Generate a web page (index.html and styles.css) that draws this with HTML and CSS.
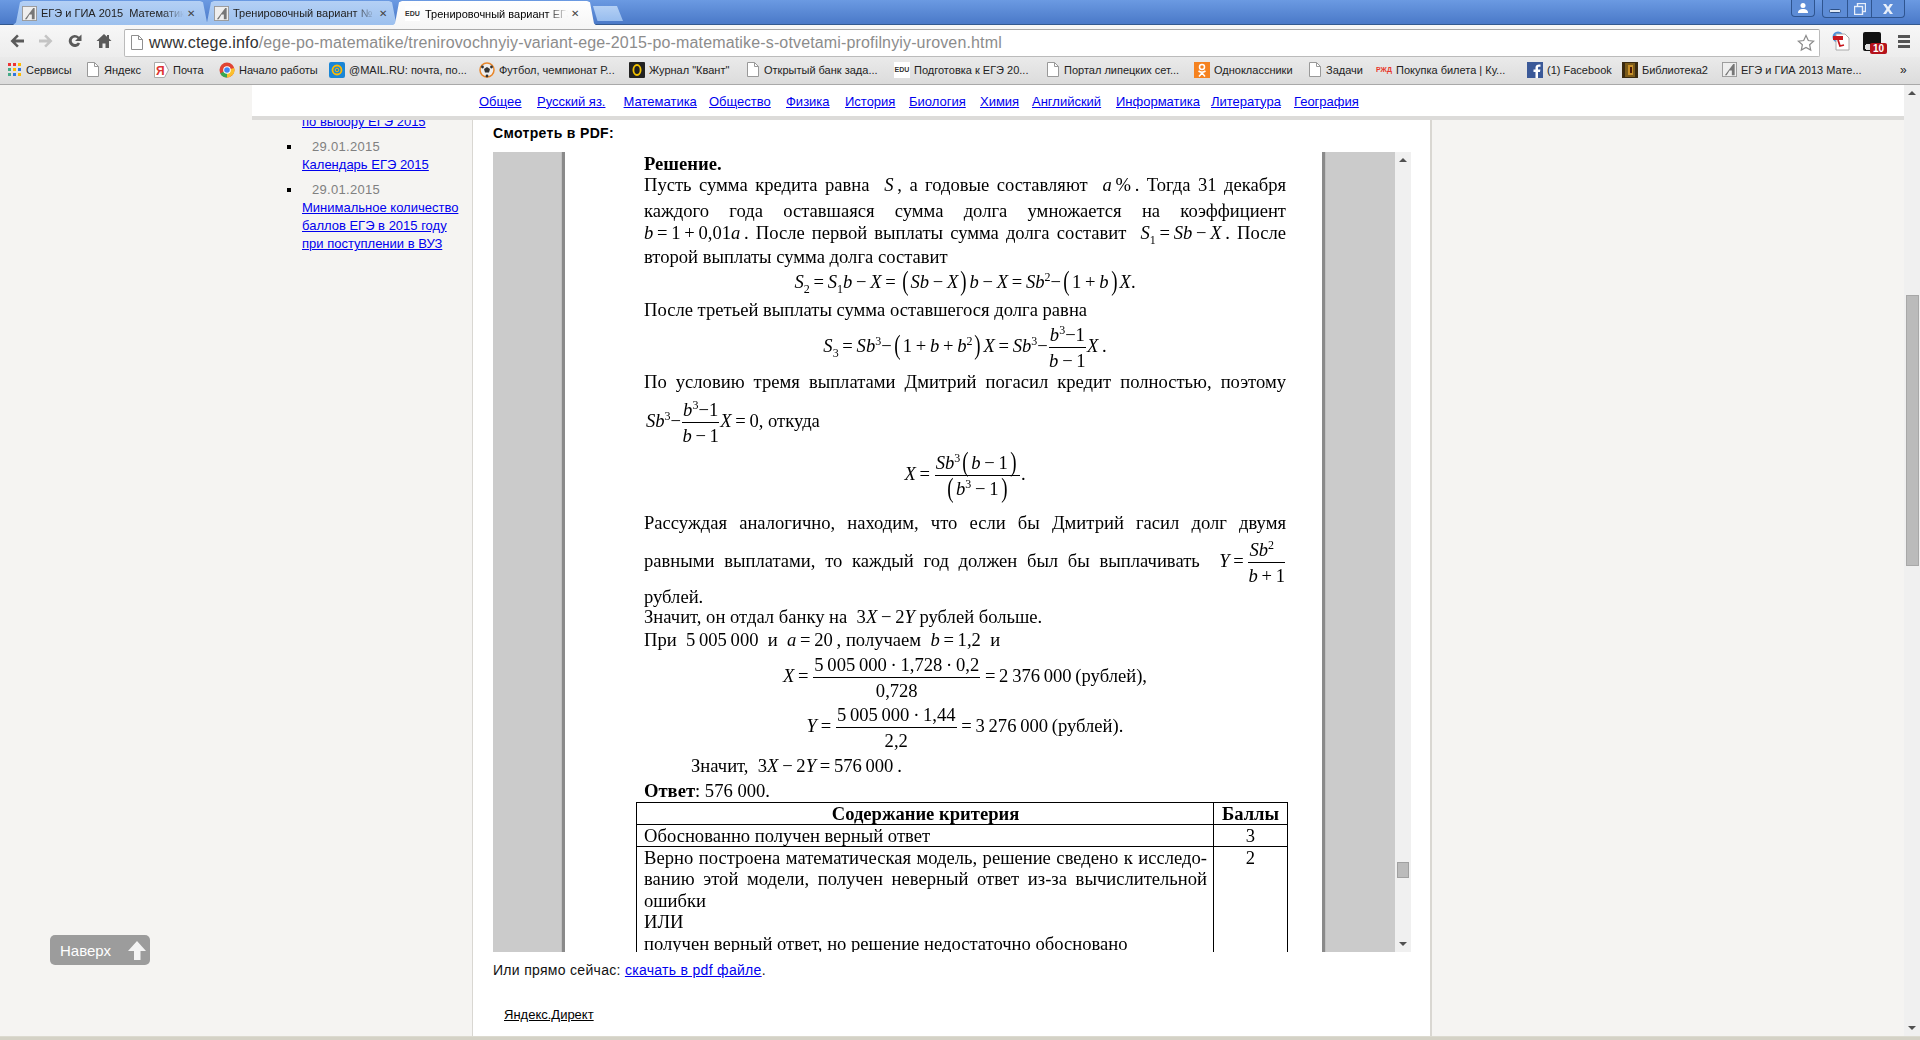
FILE: index.html
```html
<!DOCTYPE html>
<html lang="ru">
<head>
<meta charset="utf-8">
<title>Тренировочный вариант ЕГЭ</title>
<link rel="stylesheet" href="styles.css">
</head>
<body>
<div class="tabstrip">
  <div class="tabs">
    <div class="tab t1"><svg class="fav" viewBox="0 0 16 16"><rect x=".5" y=".5" width="15" height="15" fill="#eee" stroke="#999"/><path d="M3 14 12 2h1.500v12h-3V9H8l-3 5z" fill="#777"/></svg><span class="tab-title">ЕГЭ и ГИА 2015&nbsp; Математика</span><span class="tab-x">✕</span></div>
    <div class="tab t2"><svg class="fav" viewBox="0 0 16 16"><rect x=".5" y=".5" width="15" height="15" fill="#eee" stroke="#999"/><path d="M3 14 12 2h1.500v12h-3V9H8l-3 5z" fill="#777"/></svg><span class="tab-title">Тренировочный вариант №</span><span class="tab-x">✕</span></div>
    <div class="tab t3 active"><span class="edu">EDU</span><span class="tab-title">Тренировочный вариант ЕГЭ</span><span class="tab-x">✕</span></div>
    <div class="newtab"></div>
  </div>
  <div class="winbtns">
    <div class="wb wb-user"><svg width="12" height="12" viewBox="0 0 12 12"><circle cx="6" cy="3.500" r="2.500" fill="#fff"/><path d="M1 11c0-3 2-4 5-4s5 1 5 4z" fill="#fff"/></svg></div>
    <div class="wb-group">
      <div class="wb wb-min"><svg width="12" height="12" viewBox="0 0 12 12"><rect x="0.500" y="6.500" width="11" height="3" rx="1" fill="#dfe8f5" stroke="#2c4f85"/></svg></div>
      <div class="wb wb-max"><svg width="12" height="12" viewBox="0 0 12 12"><rect x="3.500" y=".5" width="8" height="8" fill="none" stroke="#e8effa" stroke-width="1.400"/><rect x=".5" y="3.500" width="8" height="8" fill="#5f8fd8" stroke="#e8effa" stroke-width="1.400"/></svg></div>
      <div class="wb wb-close"><svg width="12" height="10" viewBox="0 0 12 10"><path d="M1 0h3l2 3 2-3h3L7.500 5 11 10H8L6 7l-2 3H1l3.500-5z" fill="#e8effa"/></svg></div>
    </div>
  </div>
</div>
<div class="toolbar">
  <div class="navbtns">
    <svg width="16" height="16" viewBox="0 0 16 16"><path d="M8 1.500 1.500 8 8 14.500l1.800-1.800L6.500 9.500H15v-3H6.500l3.300-3.200z" fill="#5a5a5a"/></svg>
    <svg width="16" height="16" viewBox="0 0 16 16"><path d="M8 1.500 14.500 8 8 14.500l-1.800-1.800 3.300-3.200H1v-3h8.500L6.200 3.300z" fill="#c4c4c4"/></svg>
    <svg width="16" height="16" viewBox="0 0 16 16"><path d="M13.200 10.500A6 6 0 1 1 12 3.700L14.500 1.500V8H8l2.500-2.500a3.300 3.300 0 1 0 .3 4z" fill="#5a5a5a"/></svg>
    <svg width="16" height="16" viewBox="0 0 16 16"><path d="M8 1 0.500 8H3v7h3.500v-4.500h3V15H13V8h2.500L13 5.600V2h-2v1.800z" fill="#5a5a5a"/></svg>
  </div>
  <div class="omnibox">
    <svg class="pageicon" width="12" height="15" viewBox="0 0 12 15"><path d="M.5.5h7l4 4v10H.5z" fill="#fff" stroke="#8f8f8f"/><path d="M7.500.5v4h4" fill="none" stroke="#8f8f8f"/></svg>
    <span class="url"><span class="host">www.ctege.info</span>/ege-po-matematike/trenirovochnyiy-variant-ege-2015-po-matematike-s-otvetami-profilnyiy-uroven.html</span>
    <svg class="star" width="18" height="18" viewBox="0 0 18 18"><path d="M9 1.500l2.300 5 5.300.6-4 3.600 1.100 5.400L9 13.400 4.300 16.100l1.100-5.400-4-3.600 5.300-.6z" fill="#fff" stroke="#8a8a8a" stroke-width="1.200"/></svg>
  </div>
  <div class="ext">
    <svg width="18" height="20" viewBox="0 0 18 20"><circle cx="6" cy="6" r="5.500" fill="#4d8fd8"/><path d="M4 3h9l4 4v12H4z" fill="#fff" stroke="#aaa"/><rect x="1" y="5" width="10" height="4" fill="#c8171e"/><path d="M6 9l2 6 4-1" fill="none" stroke="#c8171e" stroke-width="1.800"/></svg>
    <div class="ext-black"><span class="badge">10</span></div>
    <div class="menu"><i></i><i></i><i></i></div>
  </div>
</div>
<div class="bookmarks">
  <div class="bm"><svg class="ico" width="14" height="14" viewBox="0 0 14 14"><g><rect x="0" y="0" width="3" height="3" fill="#e33"/><rect x="5" y="0" width="3" height="3" fill="#e33"/><rect x="10" y="0" width="3" height="3" fill="#fb0"/><rect x="0" y="5" width="3" height="3" fill="#4a8"/><rect x="5" y="5" width="3" height="3" fill="#fb0"/><rect x="10" y="5" width="3" height="3" fill="#37d"/><rect x="0" y="10" width="3" height="3" fill="#4a8"/><rect x="5" y="10" width="3" height="3" fill="#37d"/><rect x="10" y="10" width="3" height="3" fill="#fb0"/></g></svg>Сервисы</div>
  <div class="bm"><svg class="ico pg" width="12" height="15" viewBox="0 0 12 15"><path d="M.5.5h7l4 4v10H.5z" fill="#fff" stroke="#999"/><path d="M7.500.5v4h4" fill="none" stroke="#999"/></svg>Яндекс</div>
  <div class="bm"><svg class="ico" width="15" height="16" viewBox="0 0 15 16"><path d="M.5.5h10l4 7.500-4 7.500H.5z" fill="#fff" stroke="#aaa"/><text x="2" y="13" class="ya">Я</text></svg>Почта</div>
  <div class="bm"><svg class="ico" width="16" height="16" viewBox="0 0 16 16"><circle cx="8" cy="8" r="7.500" fill="#e04434"/><path d="M8 8 1.200 11.500A7.500 7.500 0 0 0 8 15.500z" fill="#35a853"/><path d="M8 8 8 15.500A7.500 7.500 0 0 0 15.200 6z" fill="#fbc02d"/><circle cx="8" cy="8" r="3.800" fill="#fff"/><circle cx="8" cy="8" r="2.800" fill="#4285f4"/></svg>Начало работы</div>
  <div class="bm"><svg class="ico" width="16" height="16" viewBox="0 0 16 16"><rect width="16" height="16" rx="2" fill="#1a86d6"/><circle cx="8" cy="8" r="4.500" fill="none" stroke="#fb0" stroke-width="1.800"/><circle cx="8" cy="8" r="1.800" fill="none" stroke="#fb0"/></svg>@MAIL.RU: почта, по...</div>
  <div class="bm"><svg class="ico" width="16" height="16" viewBox="0 0 16 16"><circle cx="8" cy="8" r="7" fill="#eee" stroke="#e8862a" stroke-width="1.500"/><path d="M8 5l3 2-1 3.500H6L5 7z" fill="#333"/><circle cx="3.500" cy="5" r="1.400" fill="#333"/><circle cx="12.500" cy="5" r="1.400" fill="#333"/><circle cx="8" cy="14" r="1.400" fill="#333"/></svg>Футбол, чемпионат Р...</div>
  <div class="bm"><svg class="ico" width="16" height="16" viewBox="0 0 16 16"><rect width="16" height="16" rx="1" fill="#222"/><ellipse cx="8" cy="8" rx="3.600" ry="5" fill="none" stroke="#f3c200" stroke-width="1.800"/></svg>Журнал "Квант"</div>
  <div class="bm"><svg class="ico pg" width="12" height="15" viewBox="0 0 12 15"><path d="M.5.5h7l4 4v10H.5z" fill="#fff" stroke="#999"/><path d="M7.500.5v4h4" fill="none" stroke="#999"/></svg>Открытый банк зада...</div>
  <div class="bm"><span class="edu edu-bm">EDU</span>Подготовка к ЕГЭ 20...</div>
  <div class="bm"><svg class="ico pg" width="12" height="15" viewBox="0 0 12 15"><path d="M.5.5h7l4 4v10H.5z" fill="#fff" stroke="#999"/><path d="M7.500.5v4h4" fill="none" stroke="#999"/></svg>Портал липецких сет...</div>
  <div class="bm"><svg class="ico" width="16" height="16" viewBox="0 0 16 16"><rect width="16" height="16" fill="#f58220"/><circle cx="8" cy="5" r="2.500" fill="none" stroke="#fff" stroke-width="1.500"/><path d="M4.500 9c2 1.300 5 1.300 7 0M8 10v1M5 14.500l3-3.500 3 3.500" fill="none" stroke="#fff" stroke-width="1.500"/></svg>Одноклассники</div>
  <div class="bm"><svg class="ico pg" width="12" height="15" viewBox="0 0 12 15"><path d="M.5.5h7l4 4v10H.5z" fill="#fff" stroke="#999"/><path d="M7.500.5v4h4" fill="none" stroke="#999"/></svg>Задачи</div>
  <div class="bm"><span class="rzd">РЖД</span>Покупка билета | Ку...</div>
  <div class="bm"><svg class="ico" width="16" height="16" viewBox="0 0 16 16"><rect width="16" height="16" fill="#3b5998"/><path d="M11 16V10h2l.4-2.500H11V6c0-.8.300-1.200 1.200-1.200h1.300V2.500c-2.800-.4-5 .2-5 3.200v1.800H6.500V10h2v6z" fill="#fff"/></svg>(1) Facebook</div>
  <div class="bm"><svg class="ico" width="16" height="16" viewBox="0 0 16 16"><rect width="16" height="16" fill="#3a2a10"/><rect x="3" y="1" width="10" height="14" fill="#7a5a1a"/><rect x="6" y="3" width="5" height="10" fill="#c8902a"/><rect x="8" y="5" width="2" height="6" fill="#4a1a08"/></svg>Библиотека2</div>
  <div class="bm"><svg class="fav ico" viewBox="0 0 16 16"><rect x=".5" y=".5" width="15" height="15" fill="#eee" stroke="#999"/><path d="M3 14 12 2h1.500v12h-3V9H8l-3 5z" fill="#777"/></svg>ЕГЭ и ГИА 2013 Мате...</div>
  <div class="bm more">»</div>
</div>
<div class="viewport">
  <div class="page">
    <aside class="sidebar">
      <ul class="news">
        <li class="cut"><a href="#">по выбору ЕГЭ 2015</a></li>
        <li><span class="date">29.01.2015</span><a href="#">Календарь ЕГЭ 2015</a></li>
        <li><span class="date">29.01.2015</span><a href="#">Минимальное количество баллов ЕГЭ в 2015 году при поступлении в ВУЗ</a></li>
      </ul>
    </aside>
    <main class="main">
      <div class="pdf-title">Смотреть в PDF:</div>
      <div class="viewer">
        <div class="sheet">
          <div class="ln b first">Решение.</div>
          <div class="ln just g1">Пусть сумма кредита равна &nbsp;<i>S</i>&#8201;, а годовые составляют &nbsp;<i>a</i>&#8201;%&#8201;. Тогда 31 декабря</div>
          <div class="ln just g6">каждого года оставшаяся сумма долга умножается на коэффициент</div>
          <div class="ln just g2"><span class="nb"><i>b</i>&#8201;=&#8201;1&#8201;+&#8201;0,01<i>a</i></span>&#8201;. После первой выплаты сумма долга составит &nbsp;<span class="nb"><i>S</i><sub>1</sub>&#8201;=&#8201;<i>Sb</i>&#8201;−&#8201;<i>X</i></span>&#8201;. После</div>
          <div class="ln g4">второй выплаты сумма долга составит</div>
          <div class="ln eq g5"><i>S</i><sub>2</sub>&#8201;=&#8201;<i>S</i><sub>1</sub><i>b</i>&#8201;−&#8201;<i>X</i>&#8201;=&#8201;<span class="bp">(</span><i>Sb</i>&#8201;−&#8201;<i>X</i><span class="bp">)</span><i>b</i>&#8201;−&#8201;<i>X</i>&#8201;=&#8201;<i>Sb</i><sup>2</sup>−<span class="bp">(</span>1&#8201;+&#8201;<i>b</i><span class="bp">)</span><i>X</i>.</div>
          <div class="ln g8">После третьей выплаты сумма оставшегося долга равна</div>
          <div class="ln eq g16"><i>S</i><sub>3</sub>&#8201;=&#8201;<i>Sb</i><sup>3</sup>−<span class="bp">(</span>1&#8201;+&#8201;<i>b</i>&#8201;+&#8201;<i>b</i><sup>2</sup><span class="bp">)</span><i>X</i>&#8201;=&#8201;<i>Sb</i><sup>3</sup>−<span class="frac"><span class="num"><i>b</i><sup>3</sup>−1</span><span class="den"><i>b</i>&#8201;−&#8201;1</span></span><i>X</i>&#8201;.</div>
          <div class="ln just g16">По условию тремя выплатами Дмитрий погасил кредит полностью, поэтому</div>
          <div class="ln g19 in2"><i>Sb</i><sup>3</sup>−<span class="frac"><span class="num"><i>b</i><sup>3</sup>−1</span><span class="den"><i>b</i>&#8201;−&#8201;1</span></span><i>X</i>&#8201;=&#8201;0, откуда</div>
          <div class="ln eq g33"><i>X</i>&#8201;=&#8201;<span class="frac"><span class="num"><i>Sb</i><sup>3</sup><span class="bp">(</span><i>b</i>&#8201;−&#8201;1<span class="bp">)</span></span><span class="den"><span class="bp">(</span><i>b</i><sup>3</sup>&#8201;−&#8201;1<span class="bp">)</span></span></span>.</div>
          <div class="ln just g29">Рассуждая аналогично, находим, что если бы Дмитрий гасил долг двумя</div>
          <div class="ln just g18">равными выплатами, то каждый год должен был бы выплачивать &nbsp;<span class="nb"><i>Y</i>&#8201;=&#8201;<span class="frac"><span class="num"><i>Sb</i><sup>2</sup></span><span class="den"><i>b</i>&#8201;+&#8201;1</span></span></span></div>
          <div class="ln g16">рублей.</div>
          <div class="ln">Значит, он отдал банку на &nbsp;3<i>X</i>&#8201;−&#8201;2<i>Y</i> рублей больше.</div>
          <div class="ln g3">При &nbsp;5&#8201;005&#8201;000 &nbsp;и &nbsp;<i>a</i>&#8201;=&#8201;20&#8201;, получаем &nbsp;<i>b</i>&#8201;=&#8201;1,2 &nbsp;и</div>
          <div class="ln eq g16"><i>X</i>&#8201;=&#8201;<span class="frac"><span class="num">5&#8201;005&#8201;000&#8201;·&#8201;1,728&#8201;·&#8201;0,2</span><span class="den">0,728</span></span>&#8201;=&#8201;2&#8201;376&#8201;000&#8201;(рублей),</div>
          <div class="ln eq g30"><i>Y</i>&#8201;=&#8201;<span class="frac"><span class="num">5&#8201;005&#8201;000&#8201;·&#8201;1,44</span><span class="den">2,2</span></span>&#8201;=&#8201;3&#8201;276&#8201;000&#8201;(рублей).</div>
          <div class="ln g20 indent">Значит, &nbsp;3<i>X</i>&#8201;−&#8201;2<i>Y</i>&#8201;=&#8201;576&#8201;000&#8201;.</div>
          <div class="ln g5"><b>Ответ</b>: 576 000.</div>
          <table class="crit">
            <tr><th>Содержание критерия</th><th class="pts">Баллы</th></tr>
            <tr><td>Обоснованно получен верный ответ</td><td class="pts">3</td></tr>
            <tr class="tall"><td><div class="cl just">Верно построена математическая модель, решение сведено к исследо-</div><div class="cl just">ванию этой модели, получен неверный ответ из-за вычислительной</div><div class="cl">ошибки</div><div class="cl">ИЛИ</div><div class="cl">получен верный ответ, но решение недостаточно обосновано</div></td><td class="pts">2</td></tr>
          </table>
        </div>
        <div class="vscroll">
          <span class="up"></span>
          <span class="thumb"></span>
          <span class="down"></span>
        </div>
      </div>
      <p class="direct-line">Или прямо сейчас: <a href="#">скачать в pdf файле</a>.</p>
      <a class="yd" href="#">Яндекс.Директ</a>
    </main>
    <div class="rest"></div>
    <header class="topnav">
      <nav class="subjects">
        <a href="#">Общее</a><a href="#">Русский яз.</a><a href="#">Математика</a><a href="#">Общество</a><a href="#">Физика</a><a href="#">История</a><a href="#">Биология</a><a href="#">Химия</a><a href="#">Английский</a><a href="#">Информатика</a><a href="#">Литература</a><a href="#">География</a>
      </nav>
    </header>
    <div class="totop"><span>Наверх</span><svg width="20" height="20" viewBox="0 0 20 20"><path d="M10 1 19 11H13.500V20H7V11H1z" fill="#f4f4f4"/></svg></div>
  </div>
  <div class="mainscroll">
    <span class="up"></span>
    <span class="mthumb"></span>
    <span class="down"></span>
  </div>
</div>
<div class="statusline"></div>
</body>
</html>
```

FILE: styles.css
```css
* { box-sizing: border-box; }
html, body { margin: 0; padding: 0; height: 100%; }
body { width: 1920px; height: 1040px; overflow: hidden; display: flex; flex-direction: column; font-family: "Liberation Sans", Arial, sans-serif; background: #f5f4f2; }

/* tab strip */
.tabstrip { height: 25px; flex: none; display: flex; justify-content: space-between; background: linear-gradient(#6b9ae2, #4a79c8); border-bottom: 1px solid #33598f; }
.tabs { display: flex; padding: 1px 0 0 13px; height: 24px; }
.tab { height: 24px; display: flex; align-items: center; background: linear-gradient(#b4d0f5, #9cc0ee); clip-path: polygon(0 100%, 3px 90%, 7px 5%, 10px 0, calc(100% - 10px) 0, calc(100% - 7px) 5%, calc(100% - 3px) 90%, 100% 100%); font-size: 11px; color: #222; }
.t1 { width: 197px; padding-left: 9px; }
.t2 { width: 195px; margin-left: -6px; padding-left: 10px; }
.t3 { width: 205px; margin-left: -7px; padding-left: 13px; background: linear-gradient(#fff, #f6f6f6); color: #000; height: 25px; }
.fav { width: 15px; height: 15px; flex: none; }
.tab-title { margin-left: 4px; width: 143px; white-space: nowrap; overflow: hidden; -webkit-mask-image: linear-gradient(90deg, #000 85%, transparent); mask-image: linear-gradient(90deg, #000 85%, transparent); }
.t3 .tab-title { margin-left: 5px; }
.tab-x { font-size: 10px; margin-left: 3px; color: #444; font-weight: bold; font-family: "DejaVu Sans", sans-serif; }
.edu { font-family: "Liberation Sans", sans-serif; font-size: 7px; font-weight: bold; color: #333; width: 15px; background: #fff; text-align: center; line-height: 15px; flex: none; }
.newtab { width: 30px; height: 15px; margin: 5px 0 0 -4px; background: linear-gradient(#b4d0f5, #98bdee); clip-path: polygon(0 0, 80% 0, 100% 100%, 15% 100%); }
.winbtns { display: flex; margin-right: 15px; gap: 7px; height: 17px; align-items: flex-start; }
.wb { height: 17px; display: flex; align-items: center; justify-content: center; }
.wb-user { width: 24px; border: 1px solid #2f5590; border-top: 0; border-radius: 0 0 4px 4px; background: #5d8cd6; }
.wb-group { display: flex; border: 1px solid #2f5590; border-top: 0; border-radius: 0 0 4px 4px; background: #5d8cd6; }
.wb-min { width: 25px; border-right: 1px solid #2f5590; }
.wb-max { width: 24px; border-right: 1px solid #2f5590; }
.wb-close { width: 32px; }

/* toolbar */
.toolbar { height: 32px; flex: none; display: flex; align-items: center; background: linear-gradient(#f7f7f7, #ededed); }
.navbtns { display: flex; gap: 13px; padding-left: 9px; width: 124px; }
.omnibox { width: 1696px; height: 28px; margin-top: 3px; background: #fff; border: 1px solid #bbb; border-top-color: #a8a8a8; border-radius: 2px; display: flex; align-items: center; padding-left: 6px; position: relative; }
.pageicon { flex: none; margin-right: 6px; }
.url { font-size: 16px; color: #8c8c8c; white-space: nowrap; letter-spacing: .15px; }
.host { color: #333; }
.star { margin-left: auto; margin-right: 4px; }
.ext { flex: 1; display: flex; align-items: center; padding-left: 12px; gap: 13px; }
.ext-black { width: 18px; height: 19px; background: radial-gradient(circle at 5px 15px, #ddd 3px, transparent 3.500px), #111; border-radius: 2px; position: relative; }
.badge { position: absolute; left: 7px; top: 11px; width: 17px; height: 11px; background: #b5121b; border-radius: 2px; color: #fff; font-size: 10px; font-weight: bold; line-height: 11px; text-align: center; }
.menu { display: flex; flex-direction: column; gap: 2px; margin-left: 4px; }
.menu i { width: 12px; height: 3px; background: #555; display: block; }

/* bookmarks */
.bookmarks { height: 28px; flex: none; background: linear-gradient(#eaeaea, #dcdcdc); border-bottom: 1px solid #a9a9a9; padding: 0 0 2px 8px; display: grid; grid-template-columns: 79px 67px 65px 110px 150px 150px 118px 147px 153px 147px 115px 67px 151px 95px 100px 178px 16px; align-items: center; font-size: 11px; color: #222; }
.bm { display: flex; align-items: center; white-space: nowrap; overflow: hidden; }
.ico { flex: none; margin-right: 4px; }
.pg { margin-right: 5px; }
.ya { font-size: 12px; fill: #d33; font-weight: bold; font-family: "Liberation Sans", sans-serif; }
.edu-bm { margin-right: 4px; width: 16px; line-height: 16px; }
.rzd { font-size: 7px; font-weight: bold; color: #e8372a; width: 18px; margin-right: 2px; flex: none; }
.more { font-size: 12px; }

/* page */
.viewport { flex: 1; min-height: 0; display: flex; }
.page { flex: 1; min-width: 0; display: grid; grid-template-columns: 473px 959px 1fr; position: relative; overflow: hidden; }
.sidebar { background: #f5f4f2; border-right: 1px solid #d9d7d2; padding-top: 28px; font-size: 13px; }
.news { list-style: square; margin: 0 0 0 302px; padding: 0; width: 160px; line-height: 18px; }
.news li { margin-bottom: 7px; }
.news .cut { list-style: none; }
.date { display: block; color: #808080; padding-left: 10px; letter-spacing: .3px; }
a { color: #0000ee; }
.main { background: #fff; border-right: 2px solid #d9d7d2; padding: 38px 0 0 20px; }
.pdf-title { font: bold 14px/20px "Liberation Sans", sans-serif; color: #000; height: 20px; margin-bottom: 9px; letter-spacing: .33px; }
.viewer { width: 918px; height: 800px; background: #cbcbcb; display: flex; justify-content: flex-end; overflow: hidden; }
.sheet { width: 757px; height: 800px; margin-right: 73px; background: #fff; box-shadow: -2px 0 1px 1px #8a8a8a, 2px 0 1px 1px #8a8a8a; padding-left: 79px; padding-right: 36px; font: 18.6px/20px "Liberation Serif", "Times New Roman", serif; color: #000; overflow: hidden; flex: none; position: relative; filter: blur(.3px); }
.vscroll { width: 16px; flex: none; background: #f0f0f0; position: relative; display: flex; flex-direction: column; align-items: center; }
.up { display: block; width: 0; height: 0; border: 4px solid transparent; border-top: 0; border-bottom: 4px solid #505050; margin-top: 6px; }
.down { display: block; width: 0; height: 0; border: 4px solid transparent; border-bottom: 0; border-top: 4px solid #505050; margin-top: auto; margin-bottom: 6px; }
.thumb { position: absolute; top: 710px; left: 2px; width: 12px; height: 16px; background: #bbb; border: 1px solid #a0a0a0; }
.mthumb { position: absolute; top: 210px; left: 2px; width: 13px; height: 271px; background: #bbb; border: 1px solid #a8a8a8; }

.ln { height: 20px; white-space: nowrap; }
.first { margin-top: 2px; }
.b { font-weight: bold; }
.just { text-align: justify; text-align-last: justify; white-space: normal; }
.nb { white-space: nowrap; }
.eq { text-align: center; }
.in2 { padding-left: 2px; }
.indent { padding-left: 47px; }
.g1 { margin-top: 1px; } .g2 { margin-top: 2px; } .g3 { margin-top: 3px; } .g4 { margin-top: 4px; } .g5 { margin-top: 5px; } .g6 { margin-top: 6px; } .g8 { margin-top: 8px; }
.g16 { margin-top: 16px; } .g18 { margin-top: 18px; } .g19 { margin-top: 19px; } .g20 { margin-top: 20px; }
.g29 { margin-top: 29px; } .g30 { margin-top: 30px; } .g33 { margin-top: 33px; }
sub, sup { font-size: 12px; line-height: 0; }
.bp { display: inline-block; font-size: 27px; line-height: 0; vertical-align: -2px; font-weight: normal; transform: scaleX(.7); margin: 0 1px; }
.frac { display: inline-block; vertical-align: middle; margin: -24px 1px; text-align: center; }
.num { display: block; border-bottom: 1px solid #000; padding: 0 1px 2px; line-height: 20px; }
.den { display: block; padding-top: 3px; line-height: 20px; }

.crit { border-collapse: collapse; table-layout: fixed; width: 652px; margin: 1px 0 0 -8px; font-size: 18.6px; }
.crit th, .crit td { border: 1px solid #000; padding: 0 6px 0 7px; vertical-align: top; height: 22px; line-height: 21px; }
.crit th:first-child, .crit td:first-child { width: 577px; }
.pts { text-align: center; padding: 0 !important; }
.tall td { padding-bottom: 40px; }
.cl { line-height: 21.4px; }

.direct-line { font-size: 14px; line-height: 20px; margin: 8px 0 0; color: #111; letter-spacing: .3px; }
.yd { display: block; width: max-content; margin: 27px 0 0 11px; font-size: 13px; line-height: 16px; color: #000; }
.rest { background: #f5f4f2; }

.topnav { position: absolute; left: 252px; top: 0; right: 0; height: 35px; background: #fff; border-bottom: 4px solid #dcdbd9; padding: 2px 0 0 227px; }
.subjects { display: grid; grid-template-columns: 58px 86.600px 85.400px 77px 59px 64px 71px 52px 84px 95px 83px max-content; font-size: 13px; height: 28px; align-items: center; justify-items: start; }
.totop { position: absolute; left: 50px; top: 850px; width: 100px; height: 30px; background: #9c9c9c; border-radius: 5px; display: flex; align-items: center; color: #fff; font-size: 15px; padding-left: 10px; }
.totop svg { margin-left: 16px; }
.mainscroll { width: 16px; flex: none; background: #f0f0f0; position: relative; display: flex; flex-direction: column; align-items: center; }
.statusline { height: 4px; flex: none; background: #d4d2c6; border-top: 1px solid #dcdad0; }
```
